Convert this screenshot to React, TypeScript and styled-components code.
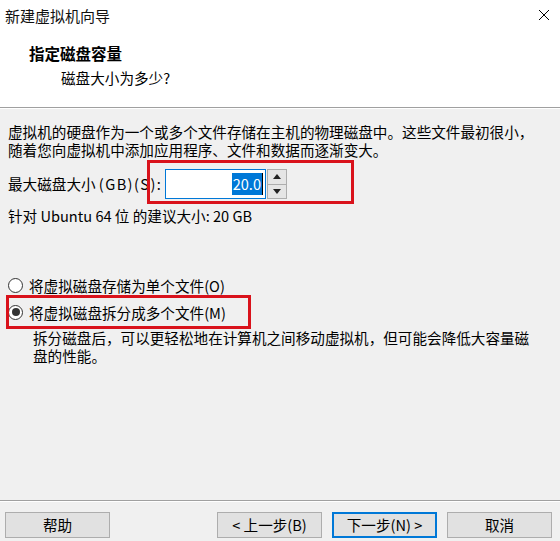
import React from "react";
import styled, { createGlobalStyle, css } from "styled-components";

const Global = createGlobalStyle`
  html, body { margin: 0; padding: 0; background: #f0f0f0; }
  body { font-family: "Noto Sans CJK SC", sans-serif; color: #000; }
`;

const Window = styled.div`
  width: 560px;
  height: 541px;
  display: flex;
  flex-direction: column;
  background: #f0f0f0;
  overflow: hidden;
  font-size: 14.6px;
`;

const Header = styled.div`
  background: #fff;
  height: 107px;
  border-bottom: 1px solid #a0a0a0;
  box-shadow: 0 1px 0 #fff;
  display: flex;
  flex-direction: column;
`;

const TitleBar = styled.div`
  height: 30px;
  display: flex;
  align-items: center;
  justify-content: space-between;
  padding: 0 10px 0 5px;
`;

const TitleText = styled.span`
  font-size: 15px;
  color: #111;
`;

const CloseIcon = styled.svg`
  width: 12px;
  height: 12px;
`;

const Heading = styled.div`
  margin: 12px 0 0 29px;
  font-size: 15.5px;
  font-weight: 700;
  line-height: 22px;
`;

const SubHeading = styled.div`
  margin: 3px 0 0 61px;
  line-height: 22px;
`;

const Body = styled.div`
  flex: 1;
  padding: 15px 8px 0 8px;
  display: flex;
  flex-direction: column;
`;

const Paragraph = styled.div`
  line-height: 18px;
`;

const SizeRow = styled.div`
  margin-top: 9px;
  display: flex;
  align-items: center;
  position: relative;
  height: 32px;
`;

const Label = styled.span`
  width: 157px;
  white-space: nowrap;
  line-height: 18px;
`;

const Latin = styled.span<{ $spacing: number }>`
  letter-spacing: ${(p) => p.$spacing}px;
`;

const Spin = styled.div`
  display: flex;
  align-items: stretch;
  height: 30px;
`;

const SpinInput = styled.div`
  width: 97px;
  border: 1px solid #0078d7;
  background: #fff;
  display: flex;
  align-items: center;
  justify-content: flex-end;
  padding-right: 2px;
`;

const Selected = styled.span`
  background: #0078d7;
  color: #fff;
  line-height: 22px;
  padding: 0 1px;
  border-right: 1px solid #000;
`;

const SpinButtons = styled.div`
  width: 20px;
  display: flex;
  flex-direction: column;
  margin-left: 1px;
`;

const SpinButton = styled.div`
  flex: 1;
  background: #e5e5e5;
  border: 1px solid #adadad;
  display: flex;
  align-items: center;
  justify-content: center;
  & + & { border-top: none; }
`;

const Highlight = styled.div<{ $left: number; $top: number; $w: number; $h: number }>`
  position: absolute;
  left: ${(p) => p.$left}px;
  top: ${(p) => p.$top}px;
  width: ${(p) => p.$w}px;
  height: ${(p) => p.$h}px;
  border: 3px solid #d9121b;
  box-sizing: border-box;
  pointer-events: none;
`;

const Suggestion = styled.div`
  margin-top: 7px;
  line-height: 18px;
`;

const Options = styled.div`
  margin-top: 51px;
  display: flex;
  flex-direction: column;
  gap: 9px;
`;

const RadioRow = styled.div`
  display: flex;
  align-items: center;
  gap: 6px;
  height: 18px;
  position: relative;
`;

const RadioCircle = styled.span<{ $checked?: boolean }>`
  width: 13px;
  height: 13px;
  border-radius: 50%;
  border: 1px solid #333;
  background: #fff;
  display: flex;
  align-items: center;
  justify-content: center;
  ${(p) =>
    p.$checked &&
    css`
      &::after {
        content: "";
        width: 8px;
        height: 8px;
        border-radius: 50%;
        background: #333;
      }
    `}
`;

const Description = styled.div`
  margin: 8px 0 0 25px;
  line-height: 18px;
  width: 520px;
`;

const Footer = styled.div`
  border-top: 1px solid #a0a0a0;
  box-shadow: inset 0 1px 0 #fff;
  height: 41px;
  padding: 11px 8px 0 5px;
  box-sizing: border-box;
  display: flex;
  align-items: flex-start;
`;

const Button = styled.div<{ $default?: boolean }>`
  width: 105px;
  height: 26px;
  box-sizing: border-box;
  background: #e1e1e1;
  border: ${(p) => (p.$default ? "2px solid #0078d7" : "1px solid #adadad")};
  display: flex;
  align-items: center;
  justify-content: center;
  font-size: 14.6px;
  line-height: 18px;
`;

const Spacer = styled.div`
  flex: 1;
`;

const ButtonGroup = styled.div`
  display: flex;
  gap: 10px;
`;

export default function App() {
  return (
    <>
      <Global />
      <Window>
        <Header>
          <TitleBar>
            <TitleText>新建虚拟机向导</TitleText>
            <CloseIcon viewBox="0 0 12 12">
              <path d="M1 1 L11 11 M11 1 L1 11" stroke="#000" strokeWidth="1" fill="none" />
            </CloseIcon>
          </TitleBar>
          <Heading>指定磁盘容量</Heading>
          <SubHeading>磁盘大小为多少?</SubHeading>
        </Header>
        <Body>
          <Paragraph>
            虚拟机的硬盘作为一个或多个文件存储在主机的物理磁盘中。这些文件最初很小，
            <br />
            随着您向虚拟机中添加应用程序、文件和数据而逐渐变大。
          </Paragraph>
          <SizeRow>
            <Label>
              最大磁盘大小 <Latin $spacing={1.4}>(GB)(S):</Latin>
            </Label>
            <Spin>
              <SpinInput>
                <Selected>20.0</Selected>
              </SpinInput>
              <SpinButtons>
                <SpinButton>
                  <svg width="8" height="5" viewBox="0 0 8 5">
                    <path d="M0 5 L4 0 L8 5 Z" fill="#222" />
                  </svg>
                </SpinButton>
                <SpinButton>
                  <svg width="8" height="5" viewBox="0 0 8 5">
                    <path d="M0 0 L4 5 L8 0 Z" fill="#222" />
                  </svg>
                </SpinButton>
              </SpinButtons>
            </Spin>
            <Highlight $left={139} $top={-8} $w={207} $h={44} />
          </SizeRow>
          <Suggestion>针对 Ubuntu 64 位 的建议大小: 20 GB</Suggestion>
          <Options>
            <RadioRow>
              <RadioCircle />
              <span>将虚拟磁盘存储为单个文件(O)</span>
            </RadioRow>
            <RadioRow>
              <RadioCircle $checked />
              <span>将虚拟磁盘拆分成多个文件(M)</span>
              <Highlight $left={-2} $top={-8} $w={245} $h={34} />
            </RadioRow>
          </Options>
          <Description>
            拆分磁盘后，可以更轻松地在计算机之间移动虚拟机，但可能会降低大容量磁
            <br />
            盘的性能。
          </Description>
        </Body>
        <Footer>
          <Button>帮助</Button>
          <Spacer />
          <ButtonGroup>
            <Button>&lt; 上一步(B)</Button>
            <Button $default>下一步(N) &gt;</Button>
            <Button>取消</Button>
          </ButtonGroup>
        </Footer>
      </Window>
    </>
  );
}
